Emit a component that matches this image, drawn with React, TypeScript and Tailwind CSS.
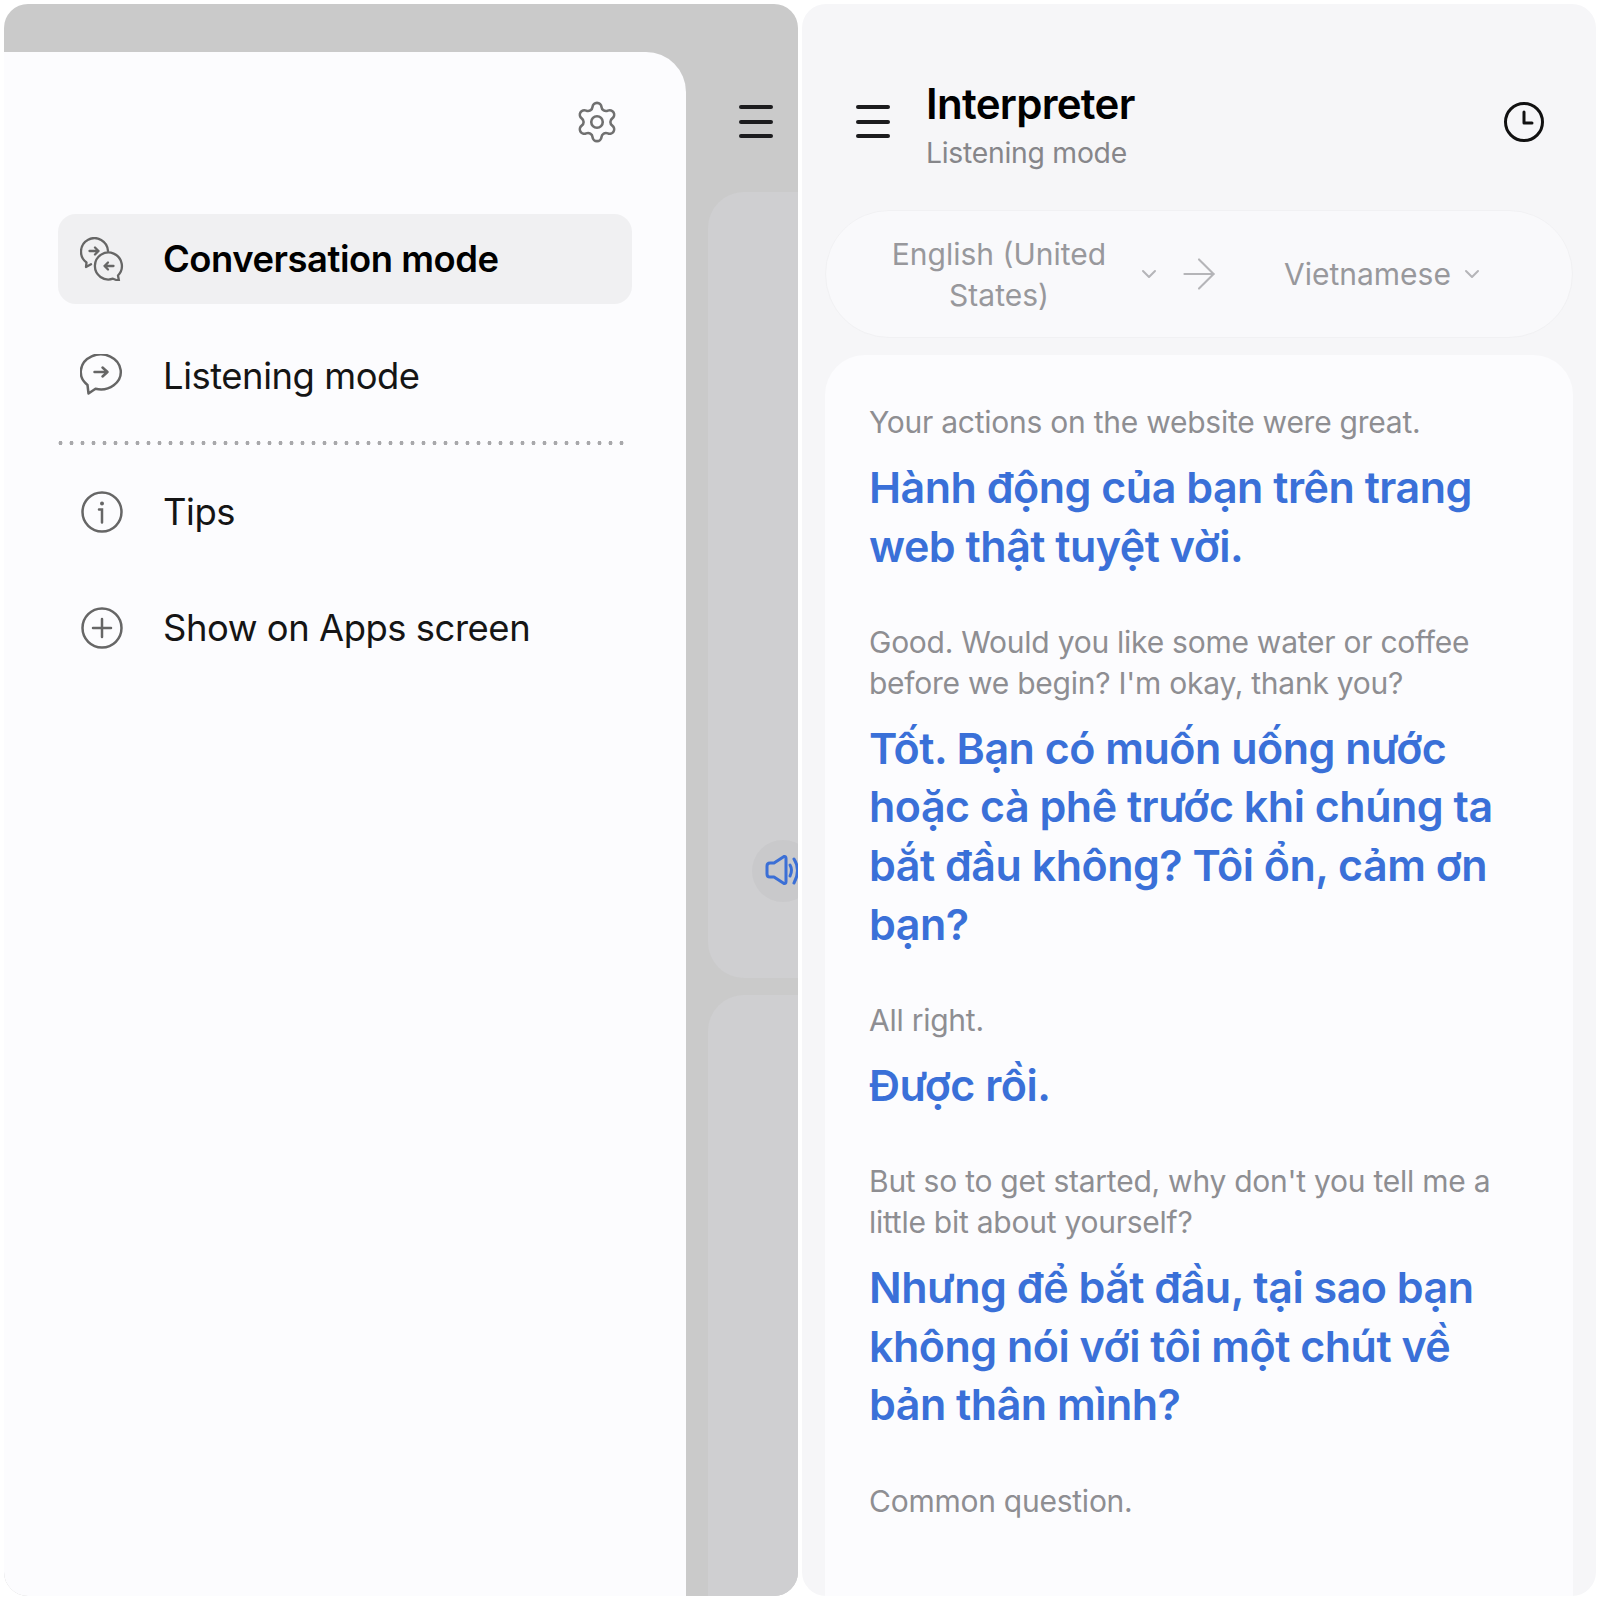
import { Settings, ChevronDown, ArrowRight } from "lucide-react";
import type { ReactNode } from "react";

const FONT = "font-['Inter','Noto_Sans',sans-serif]";

function Hamburger() {
  return (
    <div className="flex w-[34px] flex-col gap-[10.5px]">
      <span className="h-[4px] rounded-full bg-[#1c1c1e]" />
      <span className="h-[4px] rounded-full bg-[#1c1c1e]" />
      <span className="h-[4px] rounded-full bg-[#1c1c1e]" />
    </div>
  );
}

function BubblesIcon() {
  return (
    <svg width="44" height="44" viewBox="0 0 44 44" fill="none" stroke="#666" strokeWidth="2.3" strokeLinecap="round" strokeLinejoin="round">
      <path d="M28 14 A13.5 13.5 0 1 0 6.5 25.5 L6 30 L11 27.3" />
      <path d="M9.5 14h9M15 10.5l3.5 3.5-3.5 3.5" />
      <path d="M38 38.5 L39 44 L33 41.7 A13.5 13.5 0 1 1 38 38.5 Z" />
      <path d="M33.5 29h-9M28 25.5l-3.5 3.5 3.5 3.5" />
    </svg>
  );
}

function BubbleIcon() {
  return (
    <svg width="44" height="44" viewBox="0 0 44 44" fill="none" stroke="#666" strokeWidth="2.5" strokeLinecap="round" strokeLinejoin="round">
      <path d="M15.5 34.8 A20 17.5 0 1 0 7.5 31 L8.5 39.5 Z" />
      <path d="M14.5 18h13M22.5 13.5l5 4.5-5 4.5" />
    </svg>
  );
}

function InfoIcon() {
  return (
    <svg width="42" height="42" viewBox="0 0 42 42" fill="none" stroke="#666" strokeWidth="2.5" strokeLinecap="round">
      <circle cx="21" cy="21" r="19.5" />
      <circle cx="21" cy="12.5" r="2" fill="#666" stroke="none" />
      <path d="M18 18.5h3v13" />
    </svg>
  );
}

function PlusIcon() {
  return (
    <svg width="42" height="42" viewBox="0 0 42 42" fill="none" stroke="#666" strokeWidth="2.5" strokeLinecap="round">
      <circle cx="21" cy="21" r="19.5" />
      <path d="M21 12v18M12 21h18" />
    </svg>
  );
}

function ClockIcon() {
  return (
    <svg width="42" height="42" viewBox="0 0 42 42" fill="none" stroke="#111" strokeWidth="3" strokeLinecap="round" strokeLinejoin="round">
      <circle cx="21" cy="21" r="18.5" />
      <path d="M21 11v11h8" />
    </svg>
  );
}

function SpeakerIcon() {
  return (
    <svg width="40" height="34" viewBox="0 0 40 34" fill="none" stroke="#3b6fd6" strokeWidth="3" strokeLinecap="round" strokeLinejoin="round">
      <path d="M4 12Q4 9 7 9L11 9L21 2.5Q23 2 23 4.5V27.5Q23 30 21 29.5L11 23H7Q4 23 4 20Z" />
      <path d="M27 11Q30 16 27 22" />
      <path d="M31 5Q38 16 31 29" />
    </svg>
  );
}

function MenuRow({ icon, label, active }: { icon: ReactNode; label: string; active?: boolean }) {
  return (
    <div className={`flex h-[90px] items-center rounded-[18px] ${active ? "bg-[#f0f0f2]" : ""}`}>
      <div className="flex w-[88px] justify-center">{icon}</div>
      <span className={`ml-[17px] text-[36.4px] tracking-[-0.45px] ${active ? "font-semibold tracking-[-0.35px] text-black" : "text-[#151515]"}`}>{label}</span>
    </div>
  );
}

const lines = [
  {
    src: "Your actions on the website were great.",
    dst: "Hành động của bạn trên trang web thật tuyệt vời.",
  },
  {
    src: "Good. Would you like some water or coffee before we begin? I'm okay, thank you?",
    dst: "Tốt. Bạn có muốn uống nước hoặc cà phê trước khi chúng ta bắt đầu không? Tôi ổn, cảm ơn bạn?",
  },
  { src: "All right.", dst: "Được rồi." },
  {
    src: "But so to get started, why don't you tell me a little bit about yourself?",
    dst: "Nhưng để bắt đầu, tại sao bạn không nói với tôi một chút về bản thân mình?",
  },
];

export default function App() {
  return (
    <div className={`flex h-[1600px] w-[1600px] gap-[4px] overflow-hidden bg-white p-[4px] ${FONT}`}>
      <div className="flex h-[1592px] w-[794px] overflow-hidden rounded-[24px] bg-[#cacaca]">
        <div className="mt-[48px] w-[682px] shrink-0 rounded-tr-[40px] bg-[#fcfcfe] px-[54px]">
          <div className="flex justify-end pt-[47px] pr-[12px]">
            <Settings size={46} strokeWidth={1.35} className="text-[#707070]" />
          </div>
          <div className="mt-[69px]">
            <MenuRow icon={<BubblesIcon />} label="Conversation mode" active />
            <div className="mt-[27px]">
              <MenuRow icon={<BubbleIcon />} label="Listening mode" />
            </div>
            <div className="mt-[20px] mr-[6px] ml-[-3px] h-[4px] bg-[radial-gradient(circle,#a8a8ab_1.8px,transparent_2.2px)] bg-[length:11px_4px]" />
            <div className="mt-[22px]">
              <MenuRow icon={<InfoIcon />} label="Tips" />
            </div>
            <div className="mt-[26px]">
              <MenuRow icon={<PlusIcon />} label="Show on Apps screen" />
            </div>
          </div>
        </div>
        <div className="min-w-0 flex-1 pl-[22px]">
          <div className="pt-[101px] pl-[31px]">
            <Hamburger />
          </div>
          <div className="relative mt-[54px] h-[786px] w-[700px] rounded-[36px] bg-[#cfcfd1]">
            <div className="absolute top-[648px] left-[44px] flex h-[62px] w-[62px] items-center justify-center rounded-full bg-[#c9c9cb]">
              <SpeakerIcon />
            </div>
          </div>
          <div className="mt-[17px] h-[800px] w-[700px] rounded-[36px] bg-[#cfcfd1]" />
        </div>
      </div>

      <div className="h-[1592px] w-[794px] overflow-hidden rounded-[24px] bg-[#f6f6f8] px-[23px]">
        <div className="flex h-[206px] items-start">
          <div className="pt-[101px] pl-[31px]">
            <Hamburger />
          </div>
          <div className="flex-1 pt-[75px] pl-[36px]">
            <div className="text-[42px] leading-[50px] font-semibold tracking-[-0.7px] text-black">Interpreter</div>
            <div className="mt-[3px] text-[28.3px] leading-[42px] tracking-[-0.25px] text-[#86868a]">Listening mode</div>
          </div>
          <div className="pt-[97px] pr-[28px]">
            <ClockIcon />
          </div>
        </div>
        <div className="flex h-[128px] items-center rounded-[64px] border border-[#f1f1f3] bg-[#f9f9fb] text-[30px] leading-[41px] text-[#98989c]">
          <div className="w-[306px] pt-[1px] pl-[40px] text-center">English (United States)</div>
          <ChevronDown size={24} strokeWidth={2} className="ml-[5px] text-[#b5b5b8]" />
          <ArrowRight size={50} strokeWidth={1} className="ml-[13px] text-[#b5b5b8]" />
          <span className="ml-[60px]">Vietnamese</span>
          <ChevronDown size={24} strokeWidth={2} className="ml-[9px] text-[#b5b5b8]" />
        </div>
        <div className="mt-[17px] h-[1300px] rounded-[40px] bg-[#fcfcfe] px-[44px] pt-[47px]">
          {lines.map((l) => (
            <div key={l.src} className="mb-[46.7px]">
              <p className="text-[30px] leading-[41px] tracking-[-0.25px] text-[#8e8e92]">{l.src}</p>
              <p className="mt-[15px] text-[43px] leading-[58.6px] font-semibold tracking-[-0.5px] text-[#3a70d8]">{l.dst}</p>
            </div>
          ))}
          <p className="text-[30px] leading-[41px] tracking-[-0.25px] text-[#8e8e92]">Common question.</p>
        </div>
      </div>
    </div>
  );
}
